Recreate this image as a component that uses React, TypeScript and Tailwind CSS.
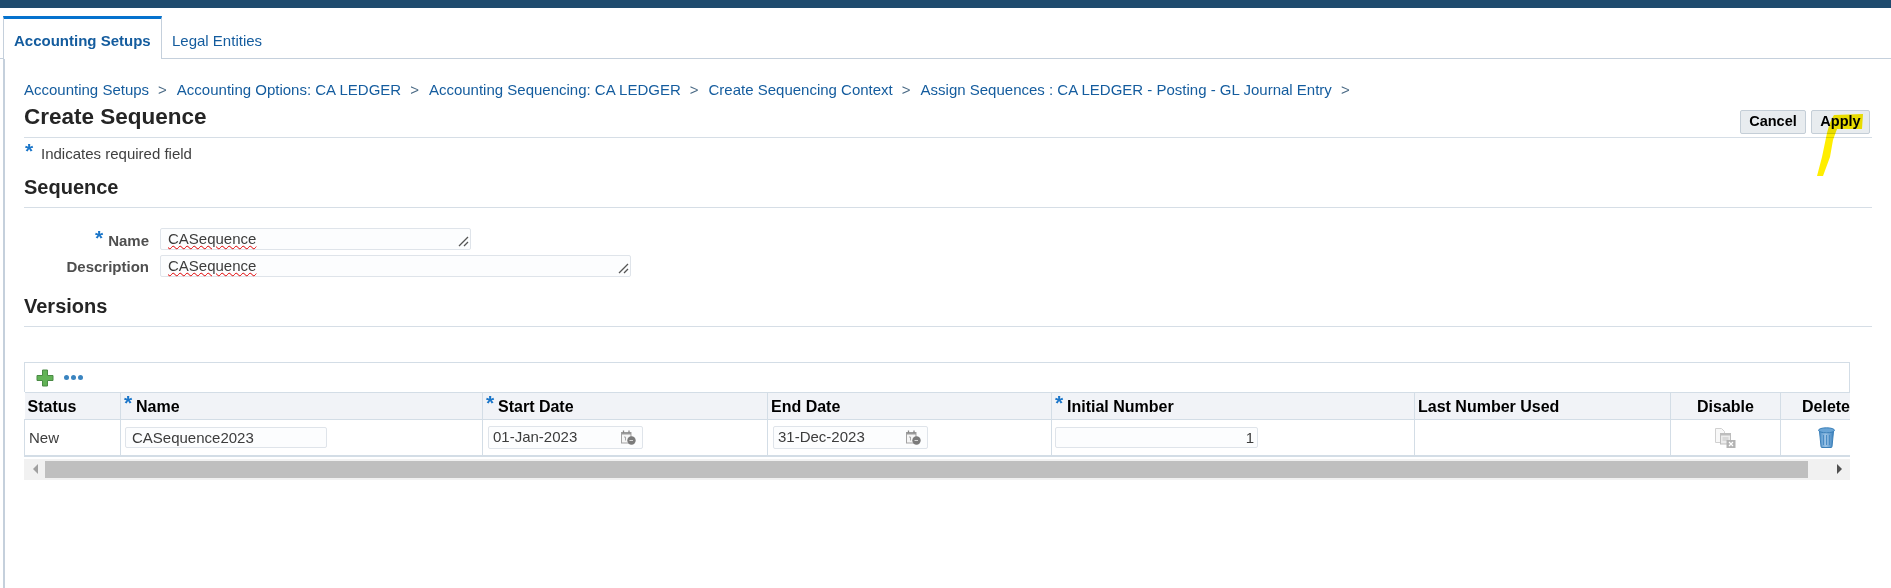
import React from "react";

const crumbs = [
  "Accounting Setups",
  "Accounting Options: CA LEDGER",
  "Accounting Sequencing: CA LEDGER",
  "Create Sequencing Context",
  "Assign Sequences : CA LEDGER - Posting - GL Journal Entry",
];

function Star({ className }: { className: string }) {
  return <span className={"absolute text-[21px] leading-[21px] font-bold text-[#1b76c9] " + className}>*</span>;
}

// little resize grip in the corner of the multi-line fields
function Grip() {
  return (
    <svg className="absolute bottom-[2px] right-[1px]" width="11" height="11" viewBox="0 0 11 11" fill="none">
      <path d="M1 10L10 1M6 10L10 6" stroke="#555" strokeWidth="1.3" />
    </svg>
  );
}

function TextBox({ width, value }: { width: string; value: string }) {
  return (
    <div className={"relative h-[22px] rounded-[2px] border border-[#dfe4ea] bg-[#fcfdfe] pl-[7px] text-[15px] leading-[20px] font-normal text-[#3c3c3c] " + width}>
      <span className="underline decoration-[#e00000] decoration-wavy decoration-1 underline-offset-[1px]">{value}</span>
      <Grip />
    </div>
  );
}

function CalendarIcon() {
  return (
    <svg width="15" height="15" viewBox="0 0 15 15" fill="none">
      <rect x="0.500" y="2.500" width="9.500" height="10.500" fill="#f6f6f6" stroke="#a3a3a3" />
      <rect x="0.500" y="2" width="9.500" height="2.500" fill="#9a9a9a" />
      <path d="M2.500 0.500v2.500M8 0.500v2.500" stroke="#888" strokeWidth="1.300" />
      <path d="M3 7h1.500v3.500" stroke="#a8a8a8" />
      <circle cx="10.500" cy="10.500" r="4.200" fill="#7b7b7b" />
      <path d="M8.500 10.500h3.500" stroke="#d8d8d8" />
    </svg>
  );
}

function DateBox({ value }: { value: string }) {
  return (
    <div className="flex h-[23px] w-[155px] items-center justify-between rounded-[2px] border border-[#dfe4ea] bg-[#fcfdfe] pl-[4px] pr-[6px] text-[15px] text-[#3c3c3c]">
      <span>{value}</span>
      <CalendarIcon />
    </div>
  );
}

function DisableIcon() {
  return (
    <svg width="21" height="20" viewBox="0 0 21 20" fill="none">
      <path d="M0.500 0.500h6l3 3v11h-9z" fill="#f8f8f8" stroke="#d0d0d0" />
      <rect x="5.500" y="5.500" width="10" height="10.500" fill="#ececec" stroke="#bdbdbd" />
      <rect x="5.500" y="5.500" width="10" height="2" fill="#bdbdbd" />
      <path d="M7.500 10h6M7.500 12h6" stroke="#c4c4c4" />
      <rect x="11.500" y="12" width="9" height="8" fill="#b3b3b3" />
      <path d="M14 14l4 4M18 14l-4 4" stroke="#fff" strokeWidth="1.200" />
    </svg>
  );
}

function TrashIcon() {
  return (
    <svg width="17" height="21" viewBox="0 0 17 21" fill="none">
      <defs>
        <linearGradient id="can" x1="0" y1="0" x2="1" y2="0">
          <stop offset="0" stopColor="#4f92cb" />
          <stop offset="0.45" stopColor="#9cc4e6" />
          <stop offset="1" stopColor="#3c82bf" />
        </linearGradient>
      </defs>
      <path d="M1.500 4.500h14l-1.500 15a1 1 0 0 1-1 1h-9a1 1 0 0 1-1-1z" fill="url(#can)" stroke="#3a7fb8" />
      <path d="M5.500 8v10M8.500 8v10M11.500 8v10" stroke="#4a8cc4" />
      <ellipse cx="8.500" cy="3.300" rx="8" ry="2.500" fill="#6aa5d6" stroke="#3a7fb8" />
    </svg>
  );
}

function Th({ children, star, center }: { children: string; star?: boolean; center?: boolean }) {
  return (
    <th className={"relative h-[27px] border-r border-b border-[#d3dde6] px-[3px] pt-[2px] text-[16px] leading-[20px] font-bold text-black " + (center ? "text-center" : "text-left")}>
      {star && <Star className="left-[3px] top-[-1px]" />}
      <span className={star ? "pl-[12px]" : ""}>{children}</span>
    </th>
  );
}

export default function App() {
  return (
    <div className="relative h-[588px] w-[1891px] overflow-hidden bg-white font-['Liberation_Sans',Arial,sans-serif]">
      <div className="h-[8px] bg-[#1f4b6e]" />

      {/* tabs */}
      <div className="mt-[8px] flex h-[43px] border-b border-[#c5d0dc] pl-[3px]">
        <div className="h-[43px] w-[159px] border-x border-t-[3px] border-x-[#c5d0dc] border-t-[#0572ce] bg-white pl-[10px] pt-[4px] text-[15px] leading-[36px] font-bold text-[#145c9e]">
          Accounting Setups
        </div>
        <div className="pl-[10px] pt-[7px] text-[15px] leading-[36px] text-[#145c9e]">Legal Entities</div>
      </div>

      <div className="ml-[3px] h-[529px] border-l-2 border-[#c5d0dc] pl-[19px] pr-[19px] pt-[21px]">
        {/* breadcrumb */}
        <div className="flex h-[20px] items-center text-[15px] text-[#145c9e]">
          {crumbs.map((c) => (
            <React.Fragment key={c}>
              <span>{c}</span>
              <span className="ml-[9px] mr-[10px] text-[#4a6a85]">&gt;</span>
            </React.Fragment>
          ))}
        </div>

        {/* title row */}
        <div className="flex h-[38px] justify-between border-b border-[#d6dee6]">
          <h1 className="mt-[4px] text-[22.500px] leading-[26px] font-bold text-[#252525]">Create Sequence</h1>
          <div className="mt-[10px] mr-[2px] flex h-[24px] gap-[5px]">
            <button className="w-[66px] rounded-[2px] border border-[#c4ced7] bg-[#e8ecef] text-[14.500px] font-bold text-black">Cancel</button>
            <button className="w-[59px] rounded-[2px] border border-[#c4ced7] bg-[#e8ecef] text-[14.500px] font-bold text-black">Apply</button>
          </div>
        </div>

        <div className="relative h-[34px] pl-[17px] pt-[6px] text-[15px] leading-[20px] text-[#404040]">
          <Star className="left-[1px] top-[2px]" />
          Indicates required field
        </div>

        <h2 className="h-[36px] border-b border-[#d6dee6] pt-[3px] text-[20px] leading-[24px] font-bold text-[#252525]">Sequence</h2>

        {/* form */}
        <div className="mt-[20px] grid grid-cols-[125px_1fr] gap-x-[11px] gap-y-[5px] text-[15px] font-bold text-[#4f4f4f]">
          <div className="relative h-[22px] pt-[3px] text-right leading-[20px]">
            <Star className="left-[71px] top-[-1px]" />
            Name
          </div>
          <TextBox width="w-[311px]" value="CASequence" />
          <div className="h-[22px] pt-[2px] text-right leading-[20px]">Description</div>
          <TextBox width="w-[471px]" value="CASequence" />
        </div>

        <h2 className="mt-[15px] h-[35px] border-b border-[#d6dee6] pt-[2px] text-[20px] leading-[24px] font-bold text-[#252525]">Versions</h2>

        {/* versions table */}
        <div className="mt-[35px] w-[1826px] overflow-hidden">
          <div className="flex h-[30px] items-center gap-[10px] border-x border-t border-[#d3dde6] pl-[11px]">
            <svg width="18" height="18" viewBox="0 0 18 18">
              <path d="M6.500 1h5v5.500H17v5h-5.500V17h-5v-5.500H1v-5h5.500z" fill="#62b356" stroke="#4a8a45" />
            </svg>
            <div className="flex gap-[2px]">
              <div className="h-[5px] w-[5px] rounded-full bg-[#3a84c0]" />
              <div className="h-[5px] w-[5px] rounded-full bg-[#3a84c0]" />
              <div className="h-[5px] w-[5px] rounded-full bg-[#3a84c0]" />
            </div>
          </div>
          <table className="w-[1847px] table-fixed border-collapse">
            <colgroup>
              <col className="w-[96px]" />
              <col className="w-[362px]" />
              <col className="w-[285px]" />
              <col className="w-[284px]" />
              <col className="w-[363px]" />
              <col className="w-[256px]" />
              <col className="w-[110px]" />
              <col className="w-[91px]" />
            </colgroup>
            <thead>
              <tr className="border-t border-[#d3dde6] bg-[#f1f3f7]">
                <Th>Status</Th>
                <Th star>Name</Th>
                <Th star>Start Date</Th>
                <Th>End Date</Th>
                <Th star>Initial Number</Th>
                <Th>Last Number Used</Th>
                <Th center>Disable</Th>
                <Th center>Delete</Th>
              </tr>
            </thead>
            <tbody>
              <tr className="h-[36px] border-b-2 border-[#d3dde6] text-[15px] text-[#3c3c3c] [&>td]:border-r [&>td]:border-[#d3dde6]">
                <td className="border-l border-[#d3dde6] px-[4px] pt-[1px]">New</td>
                <td className="px-[4px]">
                  <div className="h-[21px] w-[202px] rounded-[2px] border border-[#dfe4ea] bg-[#fcfdfe] pl-[6px] leading-[19px]">CASequence2023</div>
                </td>
                <td className="px-[5px]"><DateBox value="01-Jan-2023" /></td>
                <td className="px-[5px]"><DateBox value="31-Dec-2023" /></td>
                <td className="px-[3px]">
                  <div className="h-[21px] w-[203px] rounded-[2px] border border-[#dfe4ea] bg-[#fcfdfe] pr-[3px] text-right leading-[19px]">1</div>
                </td>
                <td />
                <td><div className="flex justify-center pt-[1px]"><DisableIcon /></div></td>
                <td><div className="flex justify-center pt-[1px]"><TrashIcon /></div></td>
              </tr>
            </tbody>
          </table>
          {/* horizontal scrollbar */}
          <div className="mt-[2px] flex h-[21px] items-center bg-[#f1f1f1] py-[2px]">
            <div className="flex w-[21px] justify-center pl-[1px]">
              <div className="h-0 w-0 border-y-[5px] border-r-[5px] border-y-transparent border-r-[#a0a0a0]" />
            </div>
            <div className="h-[17px] w-[1763px] bg-[#bfbfbf]" />
            <div className="flex flex-1 justify-end pr-[8px]">
              <div className="h-0 w-0 border-y-[5px] border-l-[5px] border-y-transparent border-l-[#505050]" />
            </div>
          </div>
        </div>
      </div>

      {/* highlighter scribble over the Apply button */}
      <svg className="pointer-events-none absolute left-[1810px] top-[105px] mix-blend-multiply" width="60" height="75" viewBox="0 0 60 75">
        <path d="M7 71L12 52L17 28C19 20 21 14 24 10L53 9L52 24L27 24L23 35L20 52L13 71z" fill="#ffee00" />
      </svg>
    </div>
  );
}
